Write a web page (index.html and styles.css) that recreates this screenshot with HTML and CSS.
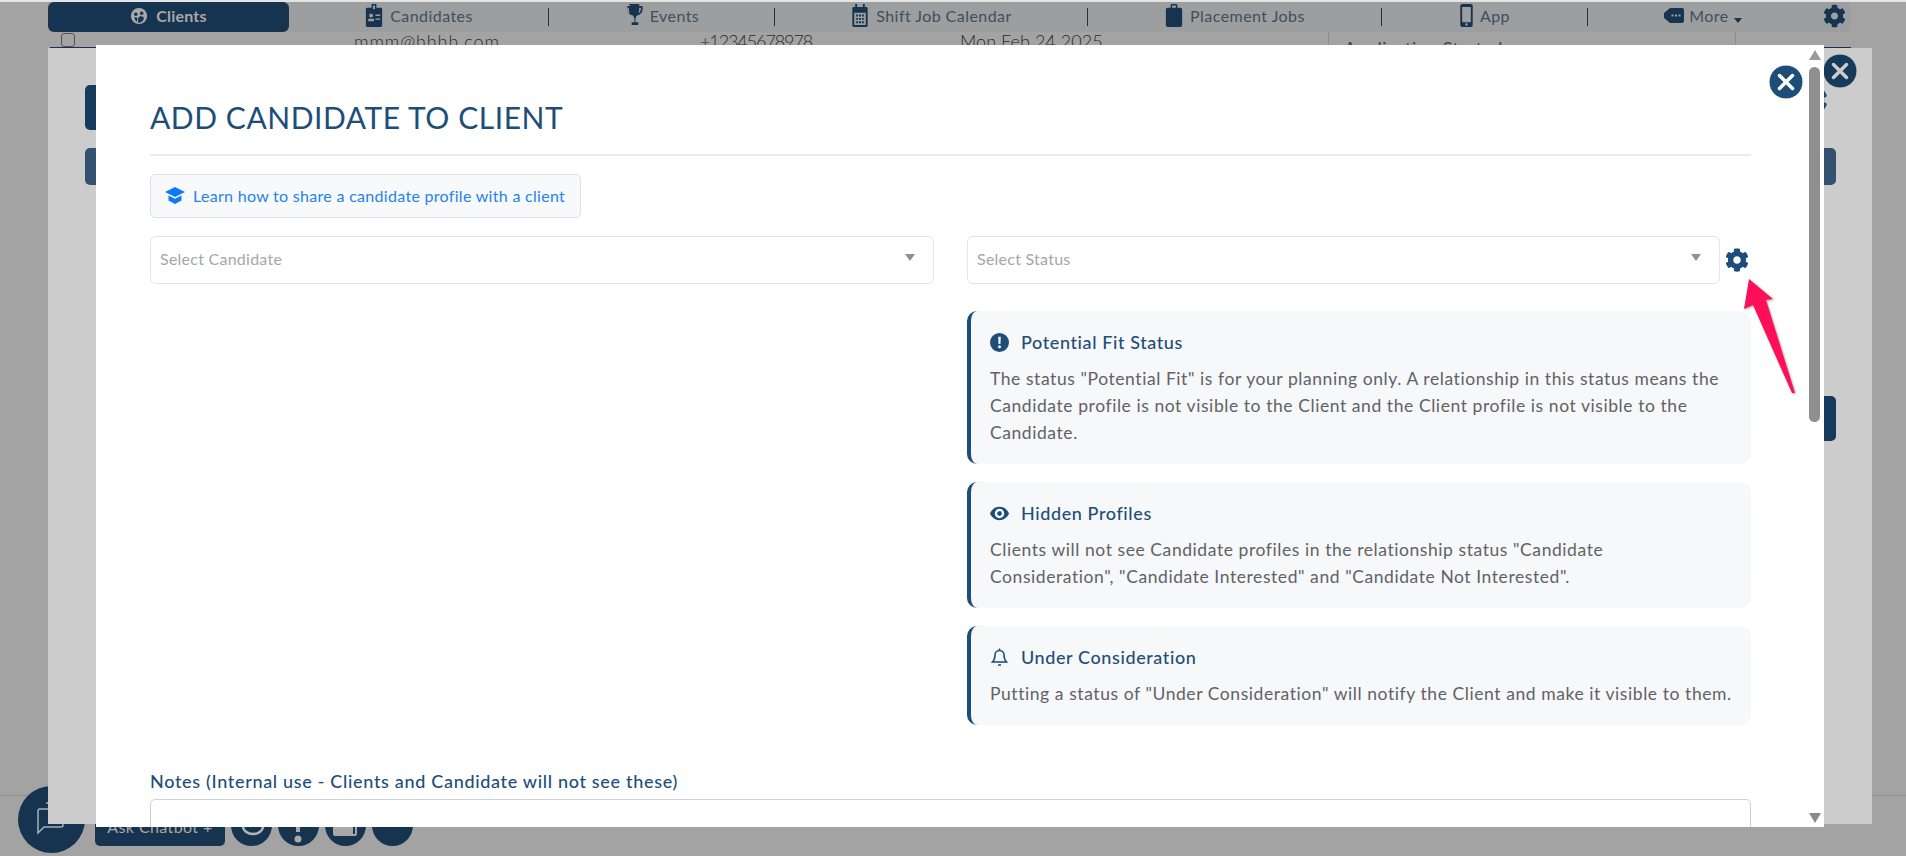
FILE: index.html
```html
<!DOCTYPE html>
<html lang="en">
<head>
<meta charset="utf-8">
<title>Add candidate to client</title>
<link rel="stylesheet" href="styles.css">
</head>
<body>
<svg class="defs" width="0" height="0" aria-hidden="true">
  <symbol id="cog" viewBox="0 0 512 512"><path d="M487.4 315.7l-42.6-24.6c4.3-23.2 4.3-47 0-70.2l42.6-24.6c4.9-2.8 7.1-8.6 5.5-14-11.1-35.6-30-67.8-54.7-94.6-3.8-4.1-10-5.1-14.8-2.3L380.8 110c-17.9-15.4-38.5-27.3-60.8-35.1V25.8c0-5.6-3.9-10.5-9.4-11.7-36.7-8.2-74.3-7.8-109.2 0-5.5 1.2-9.4 6.1-9.4 11.7V75c-22.2 7.9-42.8 19.8-60.8 35.1L88.7 85.5c-4.9-2.8-11-1.9-14.8 2.3-24.7 26.7-43.6 58.9-54.7 94.6-1.7 5.4.6 11.2 5.5 14L67.3 221c-4.3 23.2-4.3 47 0 70.2l-42.6 24.6c-4.9 2.8-7.1 8.6-5.5 14 11.1 35.6 30 67.8 54.7 94.6 3.8 4.1 10 5.1 14.8 2.3l42.6-24.6c17.9 15.4 38.5 27.3 60.8 35.1v49.2c0 5.6 3.9 10.5 9.4 11.7 36.7 8.2 74.3 7.8 109.2 0 5.5-1.2 9.4-6.1 9.4-11.7v-49.2c22.2-7.9 42.8-19.8 60.8-35.1l42.6 24.6c4.9 2.8 11 1.9 14.8-2.3 24.7-26.7 43.6-58.9 54.7-94.6 1.5-5.5-.7-11.3-5.6-14.1zM256 336c-44.1 0-80-35.9-80-80s35.9-80 80-80 80 35.9 80 80-35.9 80-80 80z"/></symbol>
  <symbol id="close" viewBox="0 0 34 34"><circle cx="17" cy="17" r="17" fill="currentColor"/><path d="M10.5 10.5l13 13M23.5 10.5l-13 13" class="close-x"/></symbol>
</svg>

<div class="strip"></div>

<nav class="nav">
  <a class="tab tab-active">
    <svg class="nav-ico" viewBox="0 0 20 20"><path fill-rule="evenodd" d="M10 1a9 9 0 1 1 0 18a9 9 0 0 1 0-18zM6.500 6a2 2 0 1 0 0 4a2 2 0 0 0 0-4zM13 5a2 2 0 1 0 0 4a2 2 0 0 0 0-4zM5 11.500c0 2 1 4 2.500 5l1-4c-1-.8-2.200-1.200-3.500-1zM11 10.500c-1.500.5-2 2-2 3.500l0 3.500c3 .2 6-1.500 6.500-5.500c-1.500-1.500-3-1.800-4.500-1.500z"/></svg>
    Clients
  </a>
  <a class="tab tab-sep tab-candidates">
    <svg class="nav-ico" viewBox="0 0 17 24"><path fill-rule="evenodd" d="M6 0h5v4h4.500a1.500 1.500 0 0 1 1.500 1.500v17a1.500 1.500 0 0 1-1.500 1.500h-14a1.500 1.500 0 0 1-1.500-1.500v-17a1.500 1.500 0 0 1 1.500-1.500h4.500zM7.500 1.500v4h2v-4zM5.500 10a2 2 0 1 0 0 4a2 2 0 0 0 0-4zM2.500 15.500v2.500h6v-2.500zM10 11v1.500h5v-1.500zM10 15v1.500h5v-1.500z"/></svg>
    Candidates
  </a>
  <a class="tab tab-sep tab-events">
    <svg class="nav-ico" viewBox="0 0 18 24"><path fill-rule="evenodd" d="M3.500 0h11v2h3.500v3c0 4-2.500 6.500-6 7c-.5 1-1.200 2-1.500 3v4h3v3h-7v-3h3v-4c-.3-1-1-2-1.500-3c-3.500-.5-6-3-6-7v-3h3.500zM1.800 3.800v1.200c0 2 1 3.800 2.700 4.700c-.6-1.800-1-3.800-1-5.900zM16.200 3.800h-1.700c0 2.100-.4 4.100-1 5.900c1.700-.9 2.700-2.700 2.700-4.700z"/></svg>
    Events
  </a>
  <a class="tab tab-sep tab-shift">
    <svg class="nav-ico" viewBox="0 0 16 24"><path fill-rule="evenodd" d="M3 0h2v3h6v-3h2v3h1.500a1.500 1.500 0 0 1 1.500 1.500v18a1.500 1.500 0 0 1-1.500 1.500h-13a1.500 1.500 0 0 1-1.500-1.500v-18a1.500 1.500 0 0 1 1.500-1.500h1.500zM2 9v13h12v-13zM4 11h2v2h-2zM7 11h2v2h-2zM10 11h2v2h-2zM4 14.500h2v2h-2zM7 14.500h2v2h-2zM10 14.500h2v2h-2zM4 18h2v2h-2zM7 18h2v2h-2zM10 18h2v2h-2z"/></svg>
    Shift Job Calendar
  </a>
  <a class="tab tab-sep tab-place">
    <svg class="nav-ico" viewBox="0 0 17 24"><path fill-rule="evenodd" d="M5 4v-2.500a1.500 1.500 0 0 1 1.500-1.500h4a1.500 1.500 0 0 1 1.500 1.500v2.500h3a2 2 0 0 1 2 2v16a2 2 0 0 1-2 2h-13a2 2 0 0 1-2-2v-16a2 2 0 0 1 2-2zM6.500 1.500v2.500h4v-2.500z"/></svg>
    Placement Jobs
  </a>
  <a class="tab tab-sep tab-app">
    <svg class="nav-ico" viewBox="0 0 13 24"><path fill-rule="evenodd" d="M2 0h9a2 2 0 0 1 2 2v20a2 2 0 0 1-2 2h-9a2 2 0 0 1-2-2v-20a2 2 0 0 1 2-2zM2 3v16h9v-16zM6.500 20a1.300 1.300 0 1 0 0 2.600a1.300 1.300 0 0 0 0-2.600z"/></svg>
    App
  </a>
  <a class="tab tab-more">
    <svg class="nav-ico" viewBox="0 0 20 15"><path fill-rule="evenodd" d="M6 0h12a2 2 0 0 1 2 2v11a2 2 0 0 1-2 2h-12l-6-5v-5zM7.500 6.500v2h2v-2zM11 6.500v2h2v-2zM14.500 6.500v2h2v-2z"/></svg>
    <span>More<span class="caret"></span></span>
  </a>
  <a class="tab tab-gear"><svg class="nav-gear"><use href="#cog"/></svg></a>
</nav>

<div class="row">
  <span class="row-check"></span>
  <span class="row-email">mmm@hhhh.com</span>
  <span class="row-phone">+12345678978</span>
  <span class="row-date">Mon Feb 24 2025</span>
  <span class="row-status">Application Started</span>
</div>

<div class="spacer"></div>

<footer class="foot">
  <button class="chat-main">
    <svg class="chat-ico" viewBox="0 0 67 67"><path d="M21 23h22a2 2 0 0 1 2 2v14a2 2 0 0 1-2 2h-17l-6 6v-22a2 2 0 0 1 2-2zM28 17h3" class="chat-line"/></svg>
  </button>
  <button class="chat-btn">Ask Chatbot +</button>
  <span class="chat-dot"><svg class="dot-ico" viewBox="0 0 41 41"><path d="M12 21a10 8 0 0 0 20 0" class="chat-line chat-line-thick"/></svg></span>
  <span class="chat-dot"><svg class="dot-ico" viewBox="0 0 41 41"><rect x="18" y="17" width="4" height="10" class="dot-fill"/><circle cx="20" cy="34" r="3.500" class="dot-fill"/></svg></span>
  <span class="chat-dot"><svg class="dot-ico" viewBox="0 0 41 41"><rect x="8" y="14" width="24" height="17" rx="2" class="dot-fill"/><rect x="28" y="14" width="2" height="15" class="dot-notch"/></svg></span>
  <span class="chat-dot"></span>
</footer>

<div class="backdrop-modal">
  <div class="back-col">
    <span class="back-btn back-btn-a"></span>
    <span class="back-btn back-btn-b"></span>
  </div>
  <div class="back-col back-col-end">
    <svg class="back-gear"><use href="#cog"/></svg>
    <span class="back-btn back-btn-c"></span>
    <span class="back-btn back-btn-d"></span>
  </div>
</div>

<svg class="close close-outer"><use href="#close"/></svg>

<main class="modal">
  <h1 class="title">ADD CANDIDATE TO CLIENT</h1>
  <a class="learn">
    <svg class="learn-ico" viewBox="0 0 20 17"><path d="M10 0l10 5l-10 5l-10-5z"/><path d="M3.500 8.500l6.500 3.300l6.500-3.300v5l-6.500 3.500l-6.500-3.500z"/></svg>
    Learn how to share a candidate profile with a client
  </a>
  <div class="cols">
    <div class="select">Select Candidate<span class="select-caret"></span></div>
    <div class="right">
      <div class="status-line">
        <div class="select select-status">Select Status<span class="select-caret"></span></div>
        <svg class="status-gear"><use href="#cog"/></svg>
      </div>
      <section class="card">
        <h2 class="card-head">
          <svg class="card-ico" viewBox="0 0 20 20"><path fill-rule="evenodd" d="M10 0a10 10 0 1 1 0 20a10 10 0 0 1 0-20zM8.600 4l.4 7.500h2l.4-7.500zM10 12.800a1.600 1.600 0 1 0 0 3.200a1.600 1.600 0 0 0 0-3.200z"/></svg>
          Potential Fit Status
        </h2>
        <p class="card-text">The status "Potential Fit" is for your planning only. A relationship in this status means the Candidate profile is not visible to the Client and the Client profile is not visible to the Candidate.</p>
      </section>
      <section class="card">
        <h2 class="card-head">
          <svg class="card-ico" viewBox="0 0 20 14"><path fill-rule="evenodd" d="M10 0c4.500 0 8.300 2.800 10 7c-1.700 4.200-5.500 7-10 7s-8.300-2.800-10-7c1.700-4.200 5.500-7 10-7zM10 2a5 5 0 1 0 0 10a5 5 0 0 0 0-10zM10 4.500a2.500 2.500 0 1 1 0 5a2.500 2.500 0 0 1 0-5z"/></svg>
          Hidden Profiles
        </h2>
        <p class="card-text">Clients will not see Candidate profiles in the relationship status "Candidate<br>Consideration", "Candidate Interested" and "Candidate Not Interested".</p>
      </section>
      <section class="card">
        <h2 class="card-head">
          <svg class="card-ico card-ico-bell" viewBox="0 0 16 19"><path d="M8 2.500c-2.700 0-4.500 2-4.500 4.500c0 4-1 5.500-2.500 7h14c-1.500-1.500-2.500-3-2.500-7c0-2.500-1.800-4.500-4.500-4.500zM8 .5v2M6.500 17h3" class="bell-line"/></svg>
          Under Consideration
        </h2>
        <p class="card-text">Putting a status of "Under Consideration" will notify the Client and make it visible to them.</p>
      </section>
    </div>
  </div>
  <label class="notes-label">Notes (Internal use - Clients and Candidate will not see these)</label>
  <div class="notes"></div>
  <div class="scrollbar">
    <span class="sb-up"></span>
    <span class="sb-thumb"></span>
    <span class="sb-down"></span>
  </div>
</main>

<svg class="close close-inner"><use href="#close"/></svg>

<svg class="arrow" viewBox="0 0 60 124"><polygon points="7,2 31,22 24,23 53,116 50,116 11,28 2,32"/></svg>
</body>
</html>
```
FILE: styles.css
```css
* { box-sizing: border-box; }
html, body { margin: 0; height: 856px; overflow: hidden; }
body {
  display: flex;
  flex-direction: column;
  position: relative;
  background: #a3a3a3;
  font-family: Lato, "Noto Sans", sans-serif;
  color: #5f6266;
}
.defs { position: absolute; }
.strip { height: 2px; background: #e4e4e4; flex: none; }

/* dimmed nav */
.nav {
  flex: none;
  display: grid;
  grid-template-columns: 241px 260px 226px 313px 294px 206px 230px 33px;
  height: 30px;
  margin-left: 48px;
  width: 1803px;
  background: #9d9e9f;
  border-radius: 0 0 6px 6px;
  color: #3f4f5e;
  font-size: 16px;
  letter-spacing: .45px;
}
.tab { display: flex; align-items: center; justify-content: center; gap: 7px; position: relative; padding-bottom: 3px; }
.tab-active { background: #163350; border-radius: 6px; color: #a8a8a8; font-weight: 700; gap: 8px; letter-spacing: .2px; }
.tab-sep::after {
  content: "";
  position: absolute;
  right: 0;
  top: 6px;
  height: 18px;
  width: 1px;
  background: #163350;
}
.nav-ico { height: 23px; width: 18px; fill: #163350; }
.tab-active .nav-ico { fill: #a8a8a8; height: 18px; width: 18px; }
.tab-app .nav-ico { width: 13px; }
.tab-more { gap: 5px; }
.tab-more .nav-ico { width: 20px; height: 15px; }
.caret {
  display: inline-block;
  width: 0;
  height: 0;
  border: 4.500px solid transparent;
  border-top: 5px solid #163350;
  border-bottom: 0;
  margin-left: 5px;
  vertical-align: -1px;
}
.nav-gear { width: 23px; height: 24px; fill: #163350; }

/* row behind the modal */
.row {
  flex: none;
  height: 16px;
  margin-left: 48px;
  display: grid;
  grid-template-columns: 306px 346px 260px 368px 408px;
  overflow: hidden;
  color: #2b2b2b;
  font-size: 18px;
  line-height: 18px;
  font-weight: 300;
}
.row-check {
  width: 14px;
  height: 14px;
  margin: 1px 0 0 13px;
  border: 1px solid #555;
  border-radius: 3px;
}
.row-email, .row-phone, .row-date { white-space: nowrap; }
.row-email { letter-spacing: .9px; }
.row-phone { letter-spacing: -1.100px; }
.row-date { letter-spacing: .05px; }
.row-status {
  border: solid #8d8d8d;
  border-width: 0 1px;
  padding: 7px 0 0 15px;
  font-size: 18px;
  letter-spacing: .4px;
  font-weight: 400;
  color: #444;
  white-space: nowrap;
}
.spacer { flex: 1; }

/* chat footer */
.foot {
  flex: none;
  height: 61px;
  border-top: 1px solid #919191;
  display: flex;
  align-items: flex-end;
  padding: 0 0 3px 18px;
  gap: 6px;
}
.foot button { border: 0; padding: 0; font: inherit; }
.foot .chat-main {
  flex: none;
  width: 67px;
  height: 67px;
  border-radius: 50%;
  background: #163350;
  margin-right: 4px;
}
.chat-ico { width: 67px; height: 67px; display: block; }
.chat-line { fill: none; stroke: #aab0b6; stroke-width: 1.500; }
.chat-line-thick { stroke-width: 2.500; stroke: #b5b5b5; }
.foot .chat-btn {
  flex: none;
  width: 130px;
  height: 40px;
  margin-bottom: 7px;
  background: #163350;
  color: #a8a8a8;
  border-radius: 5px;
  font-size: 16px;
  letter-spacing: .4px;
}
.chat-dot {
  flex: none;
  width: 41px;
  height: 41px;
  margin-bottom: 7px;
  border-radius: 50%;
  background: #163350;
}
.dot-ico { width: 41px; height: 41px; display: block; }
.dot-fill { fill: #a8a8a8; }
.dot-notch { fill: #163350; }

/* outer dimmed modal */
.backdrop-modal {
  position: absolute;
  left: 48px;
  top: 48px;
  width: 1824px;
  height: 776px;
  background: #ccc;
  display: flex;
  justify-content: space-between;
  padding: 37px 36px 0 37px;
}
.backdrop-modal::before {
  content: "";
  position: absolute;
  left: 2px;
  right: 21px;
  top: -1px;
  height: 1px;
  background: #163350;
}
.back-col { display: flex; flex-direction: column; width: 60px; }
.back-col-end { align-items: flex-end; }
.back-btn { display: block; width: 60px; border-radius: 5px; }
.back-btn-a { height: 45px; background: #163a5c; }
.back-btn-b { height: 37px; margin-top: 18px; background: #34516f; }
.back-gear { width: 30px; height: 30px; fill: #1d4e79; margin: 0 8px 0 0; }
.back-btn-c { height: 37px; margin-top: 33px; background: #34516f; }
.back-btn-d { height: 45px; margin-top: 211px; background: #163a5c; }

/* main modal */
.modal {
  position: absolute;
  left: 96px;
  top: 45px;
  width: 1728px;
  height: 782px;
  background: #fff;
  overflow: hidden;
  padding: 54px 73px 0 54px;
}
.title {
  margin: 0 0 18px;
  padding-bottom: 19px;
  border-bottom: 2px solid #e9ebee;
  height: 57px;
  font-size: 30px;
  line-height: 36px;
  font-weight: 400;
  color: #1d4e79;
  letter-spacing: .55px;
  white-space: nowrap;
}
.learn {
  display: flex;
  align-items: center;
  width: 431px;
  height: 44px;
  padding: 0 0 2px 14px;
  gap: 8px;
  background: #f7f9fb;
  border: 1px solid #dde1e6;
  border-radius: 5px;
  color: #1f83ee;
  font-size: 16px;
  letter-spacing: .3px;
  white-space: nowrap;
}
.learn-ico { width: 20px; height: 17px; fill: #0a7bf5; flex: none; }
.cols {
  display: grid;
  grid-template-columns: 784px 784px;
  gap: 33px;
  margin-top: 18px;
}
.select {
  position: relative;
  height: 48px;
  border: 1px solid #e3e5e8;
  border-radius: 6px;
  padding-left: 9px;
  line-height: 44px;
  font-size: 16px;
  color: #a6a6a6;
  background: #fff;
  letter-spacing: .25px;
}
.select-caret {
  position: absolute;
  right: 18px;
  top: 17px;
  border: 5px solid transparent;
  border-top: 7px solid #909090;
  border-bottom: 0;
}
.status-line { display: flex; align-items: center; }
.select-status { width: 753px; flex: none; }
.status-gear { width: 24px; height: 24px; margin-left: 5px; fill: #1d4e79; }
.card {
  margin-top: 18px;
  padding: 19px 19px 18px;
  background: #f7f8fa;
  border-left: 4px solid #1d4e79;
  border-radius: 10px;
}
.status-line + .card { margin-top: 27px; }
.card-head {
  display: flex;
  align-items: center;
  gap: 12px;
  margin: 0 0 11px;
  height: 24px;
  font-size: 18px;
  font-weight: 500;
  color: #1d4e79;
  letter-spacing: .6px;
}
.card-ico { width: 19px; height: 19px; fill: #1d4e79; flex: none; }
.card-ico-bell { fill: none; }
.bell-line { fill: none; stroke: #1d4e79; stroke-width: 1.600; }
.card-text {
  margin: 0;
  font-size: 17.500px;
  line-height: 27px;
  color: #5f6266;
  letter-spacing: .57px;
}
.notes-label {
  display: block;
  margin-top: 44px;
  height: 24px;
  line-height: 24px;
  font-size: 18px;
  font-weight: 500;
  color: #1d4e79;
  letter-spacing: .68px;
  white-space: nowrap;
}
.notes {
  margin-top: 6px;
  height: 60px;
  border: 1px solid #ced1d5;
  border-radius: 5px;
}
.scrollbar {
  position: absolute;
  right: 3px;
  top: 5px;
  width: 13px;
  height: 773px;
  display: flex;
  flex-direction: column;
  align-items: center;
}
.sb-up {
  border: 6.500px solid transparent;
  border-bottom: 10px solid #9a9a9a;
  border-top: 0;
}
.sb-thumb {
  width: 11px;
  height: 355px;
  margin-top: 7px;
  background: #8f8f8f;
  border-radius: 6px;
}
.sb-down {
  margin-top: auto;
  border: 6.500px solid transparent;
  border-top: 10px solid #8a8a8a;
  border-bottom: 0;
}

/* close buttons */
.close { position: absolute; width: 34px; height: 34px; }
.close-x { fill: none; stroke-width: 3.500; stroke-linecap: round; }
.close-outer { left: 1823px; top: 54px; color: #163a5c; stroke: #ccc; }
.close-inner { left: 1769px; top: 65px; color: #1d4e79; stroke: #fff; }

.arrow {
  position: absolute;
  left: 1742px;
  top: 277px;
  width: 60px;
  height: 124px;
  fill: #ff0f5a;
  filter: drop-shadow(1px 1px 1px rgba(0, 0, 0, .35));
}
```
